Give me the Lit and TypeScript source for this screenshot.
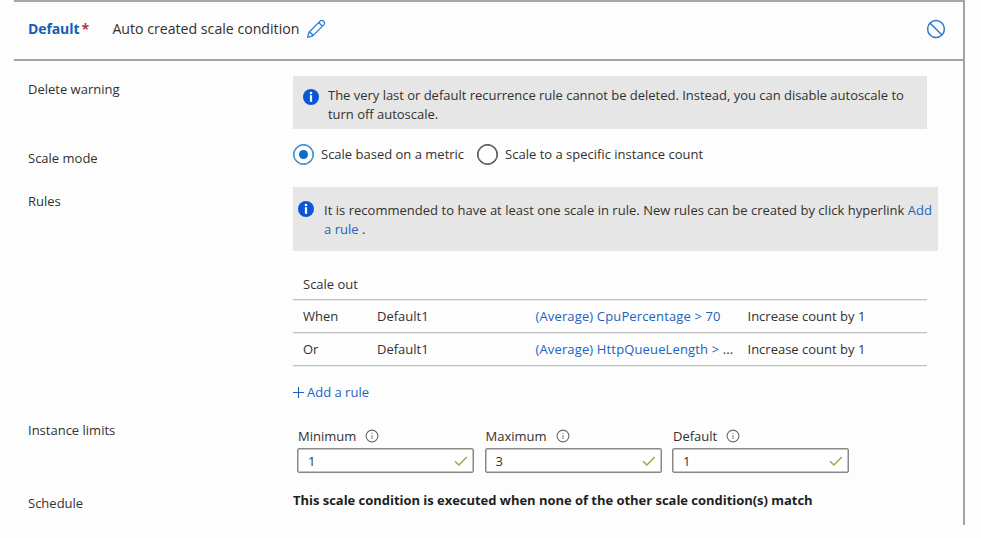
import { LitElement, html, css, nothing } from "lit";

interface Rule {
  join: string;
  source: string;
  metric: string;
  truncated: boolean;
  action: string;
}

const RULES: Rule[] = [
  { join: "When", source: "Default1", metric: "(Average) CpuPercentage > 70", truncated: false, action: "Increase count by 1" },
  { join: "Or", source: "Default1", metric: "(Average) HttpQueueLength >", truncated: true, action: "Increase count by 1" },
];

const LIMITS = [
  { label: "Minimum", value: "1" },
  { label: "Maximum", value: "3" },
  { label: "Default", value: "1" },
];

const infoSolid = html`<svg class="info-solid" viewBox="0 0 16 16" aria-hidden="true">
  <circle cx="8" cy="8" r="8" fill="#0b56d6" />
  <circle cx="8" cy="4" r="1.3" fill="#fff" />
  <rect x="6.9" y="6.2" width="2.2" height="6.6" fill="#fff" />
</svg>`;

const infoOutline = html`<svg class="info-outline" viewBox="0 0 14 14" aria-hidden="true">
  <circle cx="7" cy="7" r="5.9" fill="none" stroke="#6b6b6b" stroke-width="1.1" />
  <path d="M7 6.1V10M7 3.9V5" stroke="#777" stroke-width="1" fill="none" />
</svg>`;

const check = html`<svg class="check" viewBox="0 0 14 12" aria-hidden="true">
  <path d="M1 6.2L4.9 10L12.8 2" fill="none" stroke="#8db049" stroke-width="1.5" />
</svg>`;

class AppRoot extends LitElement {
  static styles = css`
    :host {
      display: block;
      height: 538px;
      overflow: hidden;
      background: #fdfdfd;
      color: #323130;
      font: 13px/18px "Open Sans", "Noto Sans", sans-serif;
    }
    * { box-sizing: border-box; }
    svg { display: block; flex: none; }
    .panel {
      width: 951px;
      height: 525px;
      margin-left: 14px;
      border-top: 2px solid #a6a6a6;
      border-right: 2px solid #a3a3a3;
    }
    .header {
      display: flex;
      align-items: center;
      height: 59px;
      padding: 0 17px 3px 14px;
      border-bottom: 2px solid #a3a3a3;
      font-size: 14.15px;
    }
    .name { color: #1160b7; font-weight: 700; font-size: 14px; letter-spacing: -0.1px; }
    .star { color: #a4262c; margin-left: 2px; width: 8px; font-weight: 600; }
    .title { margin-left: 23px; }
    .pencil { width: 20px; height: 20px; margin-left: 7px; }
    .block { width: 20px; height: 20px; margin-left: auto; }
    .row { display: grid; grid-template-columns: 265px 1fr; margin-left: 14px; }
    .label { padding-top: 5px; }
    .delete { padding-top: 15px; height: 83px; }
    .delete .label { padding-top: 4px; }
    .mode { height: 43px; }
    .rules { height: 234px; }
    .limits { height: 64px; }
    .limits .label { padding-top: 0; }
    .schedule .label { padding-top: 9px; }
    .note { display: flex; background: #e6e6e6; }
    .note.warning { width: 634px; height: 53px; padding: 10px 20px 0 10px; line-height: 18.5px; letter-spacing: -0.02px; }
    .note.warning .info-solid { margin: 3px 9px 0 0; }
    .note.advice { width: 645px; height: 64px; padding: 14px 0 0 5px; line-height: 19px; letter-spacing: 0.023px; }
    .note.advice .info-solid { margin: 0 10px 0 0; }
    .info-solid { width: 16px; height: 16px; }
    .link { color: #1b64bd; }
    .radios { display: flex; align-items: center; height: 21px; }
    .radio { display: flex; align-items: center; gap: 7px; margin-right: 13px; white-space: nowrap; }
    .choice { padding-bottom: 2px; }
    .dot {
      display: grid;
      place-items: center;
      width: 21px;
      height: 21px;
      border: 1px solid #323130;
      border-radius: 50%;
      background: #fff;
      box-shadow: inset 0 0 0 0.5px #323130;
    }
    .dot.on { border-color: #0f74cc; box-shadow: inset 0 0 0 0.5px #0f74cc; }
    .dot.on::after { content: ""; width: 9px; height: 9px; border-radius: 50%; background: #0f6cc6; }
    .table { width: 634px; margin-top: 17px; }
    .line {
      display: grid;
      grid-template-columns: 74px 158.5px 212px 1fr;
      align-items: center;
      height: 33px;
      padding-left: 10px;
      border-bottom: 1px solid #c0c0c0;
      box-shadow: 0 1px 0 #ececec;
      white-space: nowrap;
    }
    .line.head { height: 32px; }
    .metric { letter-spacing: 0.14px; }
    .add { display: flex; align-items: center; gap: 3px; margin-top: 17px; color: #1b64bd; }
    .plus { width: 11px; height: 11px; }
    .fields { display: flex; gap: 10.5px; padding: 6px 0 0 4px; }
    .caption { display: flex; align-items: center; height: 18px; padding-left: 1px; }
    .info-outline { width: 14px; height: 14px; margin-left: 9px; }
    .box {
      display: flex;
      align-items: center;
      justify-content: space-between;
      width: 177px;
      height: 25px;
      margin-top: 3px;
      padding: 0 5px 0 10px;
      border: 1px solid #8a8886;
      border-radius: 2px;
      background: #fff;
      box-shadow: inset 0 0 0 0.5px #8a8886;
    }
    .check { width: 14px; height: 12px; }
    .statement { padding-top: 6px; color: #201f1e; font-weight: 700; letter-spacing: -0.03px; white-space: nowrap; }
  `;

  render() {
    return html`
      <section class="panel">
        <header class="header">
          <span class="name">Default</span><span class="star">*</span>
          <span class="title">Auto created scale condition</span>
          <svg class="pencil" viewBox="0 0 20 20" fill="none" stroke="#2b7cd3" stroke-width="1.3" stroke-linejoin="round">
            <path d="M1.6 18.4L3 13.2L14.3 1.9Q16 .7 17.6 2.3Q19.2 4 18 5.6L6.8 16.9ZM3 13.2Q6 13.8 6.8 16.9M12.7 3.5L16.4 7.2" />
          </svg>
          <svg class="block" viewBox="0 0 20 20" fill="none" stroke="#2b7cc4" stroke-width="1.5">
            <circle cx="10" cy="10" r="8.4" /><path d="M4 4L16 16" />
          </svg>
        </header>

        <div class="row delete">
          <div class="label">Delete warning</div>
          <div class="note warning">
            ${infoSolid}
            <span>The very last or default recurrence rule cannot be deleted. Instead, you can disable autoscale to<br />turn off autoscale.</span>
          </div>
        </div>

        <div class="row mode">
          <div class="label">Scale mode</div>
          <div class="radios">
            <span class="radio"><i class="dot on"></i><span class="choice">Scale based on a metric</span></span>
            <span class="radio"><i class="dot"></i><span class="choice">Scale to a specific instance count</span></span>
          </div>
        </div>

        <div class="row rules">
          <div class="label">Rules</div>
          <div>
            <div class="note advice">
              ${infoSolid}
              <span>It is recommended to have at least one scale in rule. New rules can be created by click hyperlink
                <span class="link">Add<br />a rule</span> .</span>
            </div>
            <div class="table">
              <div class="line head">Scale out</div>
              ${RULES.map((r) => html`<div class="line">
                <span>${r.join}</span>
                <span>${r.source}</span>
                <span class="metric"><span class="link">${r.metric}</span>${r.truncated ? " ..." : nothing}</span>
                <span>${r.action}</span>
              </div>`)}
            </div>
            <div class="add">
              <svg class="plus" viewBox="0 0 11 11"><path d="M5.5 0V11M0 5.5H11" stroke="#1b64bd" stroke-width="1.1" /></svg>
              <span>Add a rule</span>
            </div>
          </div>
        </div>

        <div class="row limits">
          <div class="label">Instance limits</div>
          <div class="fields">
            ${LIMITS.map((f) => html`<div>
              <div class="caption">${f.label}${infoOutline}</div>
              <div class="box"><span>${f.value}</span>${check}</div>
            </div>`)}
          </div>
        </div>

        <div class="row schedule">
          <div class="label">Schedule</div>
          <div class="statement">This scale condition is executed when none of the other scale condition(s) match</div>
        </div>
      </section>
    `;
  }
}

customElements.define("app-root", AppRoot);
